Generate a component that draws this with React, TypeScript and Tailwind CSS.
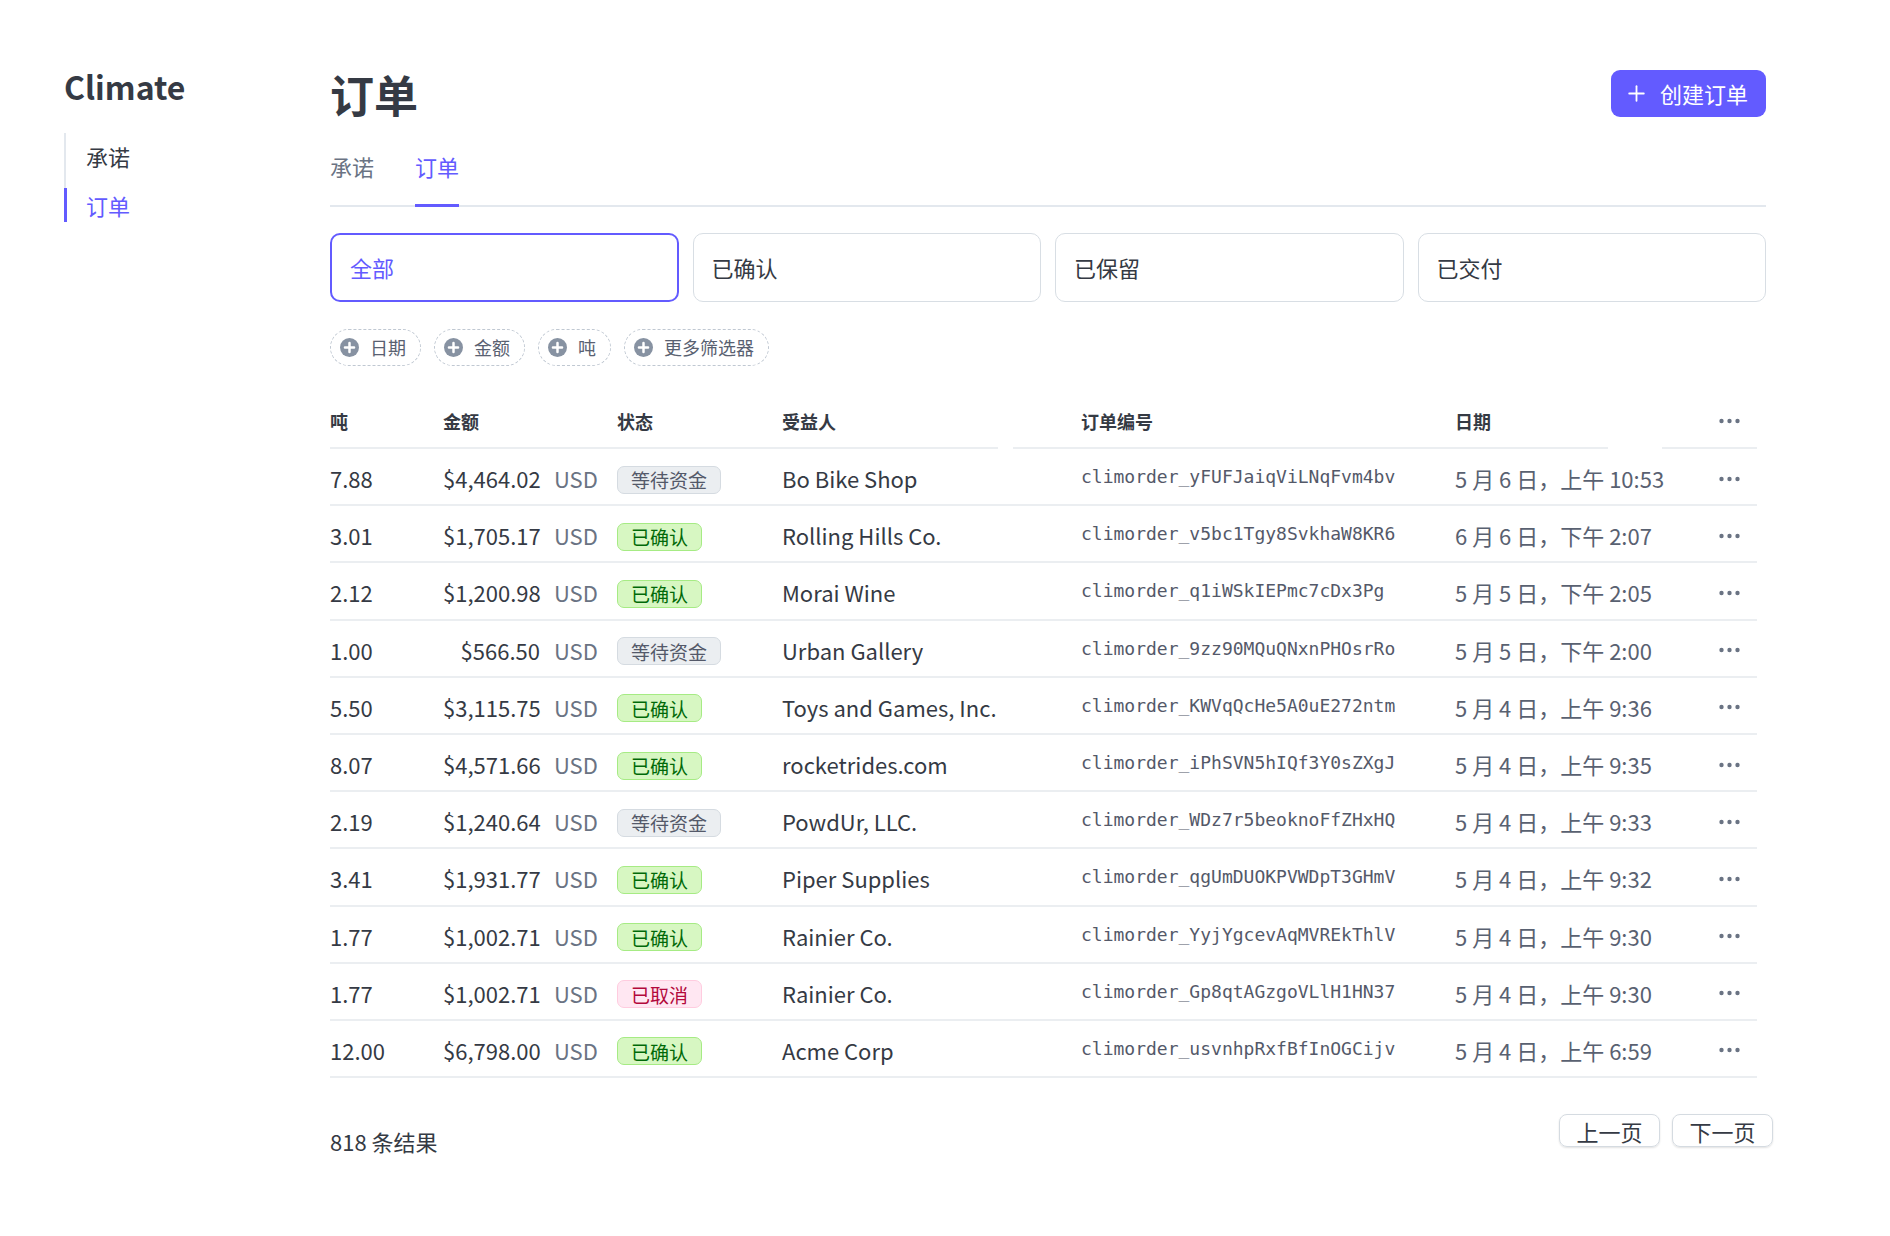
import { Plus } from 'lucide-react';

type StatusT = '等待资金' | '已确认' | '已取消';

type OrderT = {
  tons: string;
  amount: string;
  status: StatusT;
  beneficiary: string;
  orderId: string;
  date: string;
};

const ORDERS: OrderT[] = [
  { tons: '7.88', amount: '$4,464.02', status: '等待资金', beneficiary: 'Bo Bike Shop', orderId: 'climorder_yFUFJaiqViLNqFvm4bv', date: '5 月 6 日，上午 10:53' },
  { tons: '3.01', amount: '$1,705.17', status: '已确认', beneficiary: 'Rolling Hills Co.', orderId: 'climorder_v5bc1Tgy8SvkhaW8KR6', date: '6 月 6 日，下午 2:07' },
  { tons: '2.12', amount: '$1,200.98', status: '已确认', beneficiary: 'Morai Wine', orderId: 'climorder_q1iWSkIEPmc7cDx3Pg', date: '5 月 5 日，下午 2:05' },
  { tons: '1.00', amount: '$566.50', status: '等待资金', beneficiary: 'Urban Gallery', orderId: 'climorder_9zz90MQuQNxnPHOsrRo', date: '5 月 5 日，下午 2:00' },
  { tons: '5.50', amount: '$3,115.75', status: '已确认', beneficiary: 'Toys and Games, Inc.', orderId: 'climorder_KWVqQcHe5A0uE272ntm', date: '5 月 4 日，上午 9:36' },
  { tons: '8.07', amount: '$4,571.66', status: '已确认', beneficiary: 'rocketrides.com', orderId: 'climorder_iPhSVN5hIQf3Y0sZXgJ', date: '5 月 4 日，上午 9:35' },
  { tons: '2.19', amount: '$1,240.64', status: '等待资金', beneficiary: 'PowdUr, LLC.', orderId: 'climorder_WDz7r5beoknoFfZHxHQ', date: '5 月 4 日，上午 9:33' },
  { tons: '3.41', amount: '$1,931.77', status: '已确认', beneficiary: 'Piper Supplies', orderId: 'climorder_qgUmDUOKPVWDpT3GHmV', date: '5 月 4 日，上午 9:32' },
  { tons: '1.77', amount: '$1,002.71', status: '已确认', beneficiary: 'Rainier Co.', orderId: 'climorder_YyjYgcevAqMVREkThlV', date: '5 月 4 日，上午 9:30' },
  { tons: '1.77', amount: '$1,002.71', status: '已取消', beneficiary: 'Rainier Co.', orderId: 'climorder_Gp8qtAGzgoVLlH1HN37', date: '5 月 4 日，上午 9:30' },
  { tons: '12.00', amount: '$6,798.00', status: '已确认', beneficiary: 'Acme Corp', orderId: 'climorder_usvnhpRxfBfInOGCijv', date: '5 月 4 日，上午 6:59' },
];

const STATUS_CLASS: Record<StatusT, string> = {
  等待资金: 'border-[#d5dbe1] bg-[#ebeef1] text-[#545969]',
  已确认: 'border-[#a6eb84] bg-[#d7f7c2] text-[#006908]',
  已取消: 'border-[#ffccdf] bg-[#ffe7f2] text-[#b3093c]',
};

const FILTERS = ['全部', '已确认', '已保留', '已交付'];
const CHIPS = ['日期', '金额', '吨', '更多筛选器'];

function Dots() {
  return (
    <svg width="21" height="6" viewBox="0 0 21 6" className="text-[#6a7383]">
      <circle cx="2.5" cy="3" r="2.2" fill="currentColor" />
      <circle cx="10.5" cy="3" r="2.2" fill="currentColor" />
      <circle cx="18.5" cy="3" r="2.2" fill="currentColor" />
    </svg>
  );
}

function PlusCircle() {
  return (
    <svg width="19" height="19" viewBox="0 0 20 20">
      <circle cx="10" cy="10" r="10" fill="#8792a2" />
      <path d="M10 5.2v9.6M5.2 10h9.6" stroke="white" strokeWidth="2.6" strokeLinecap="round" />
    </svg>
  );
}

function StatusBadge({ status }: { status: StatusT }) {
  return (
    <span className={`inline-flex h-[28px] items-center rounded-[7px] border px-[13px] text-[19px] leading-none ${STATUS_CLASS[status]}`}>
      {status}
    </span>
  );
}

function OrderRow({ order }: { order: OrderT }) {
  return (
    <div className="flex h-[57.2px] items-center border-b-2 border-[#ebeef1] pt-[4px] text-[22px] text-[#353a44]">
      <div className="w-[113px]">{order.tons}</div>
      <div className="flex w-[174px] items-center">
        <span className="w-[97px] text-right">{order.amount}</span>
        <span className="ml-[14px] text-[#6a7383]">USD</span>
      </div>
      <div className="w-[165px]">
        <StatusBadge status={order.status} />
      </div>
      <div className="w-[231px] whitespace-nowrap">{order.beneficiary}</div>
      <div className="w-[442px] pb-[4px] pl-[68px] font-['DejaVu_Sans_Mono',monospace] text-[18px] text-[#545969]">
        {order.orderId}
      </div>
      <div className="w-[207px] whitespace-nowrap text-[#596171]">{order.date}</div>
      <div className="flex flex-1 justify-end pr-[17px]">
        <Dots />
      </div>
    </div>
  );
}

export default function App() {
  return (
    <div className="flex min-h-screen bg-white font-['Noto_Sans_CJK_SC','Noto_Sans',sans-serif] text-[#353a44]">
      <aside className="w-[330px] shrink-0 pl-[64px] pt-[64px]">
        <div className="text-[32px] font-semibold leading-[44px] text-[#353a44]">Climate</div>
        <nav className="mt-[25px] flex flex-col gap-[15px] border-l-2 border-[#e3e8ee] pt-[6px] text-[22px]">
          <a className="flex h-[34px] items-center pl-[20px] text-[#353a44]">承诺</a>
          <a className="-ml-[2px] flex h-[34px] items-center border-l-[3px] border-[#635bff] pl-[19px] text-[#635bff]">订单</a>
        </nav>
      </aside>

      <main className="flex-1 pr-[124px] pt-[70px]">
        <div className="flex h-[47px] items-center justify-between">
          <h1 className="text-[44px] font-bold leading-none text-[#353a44]">订单</h1>
          <button
            type="button"
            className="flex h-[47px] items-center gap-[11px] rounded-[9px] bg-[#635bff] pl-[13px] pr-[18px] text-[22px] text-white"
          >
            <Plus size={25} strokeWidth={1.75} />
            创建订单
          </button>
        </div>

        <div className="mt-[34px] flex gap-[41px] border-b-2 border-[#e3e8ee] text-[22px]">
          <button type="button" className="-mb-[2px] flex h-[56px] items-start border-b-[3px] border-transparent leading-[30px] text-[#6a7383]">
            承诺
          </button>
          <button type="button" className="-mb-[2px] flex h-[56px] items-start border-b-[3px] border-[#635bff] leading-[30px] text-[#635bff]">
            订单
          </button>
        </div>

        <div className="mt-[26px] grid grid-cols-4 gap-[14px]">
          {FILTERS.map((label, i) => (
            <button
              key={label}
              type="button"
              className={`flex h-[69px] items-center rounded-[10px] px-[18px] text-left text-[22px] ${
                i === 0 ? 'border-2 border-[#635bff] text-[#635bff]' : 'border-[1.5px] border-[#d8dee4] text-[#353a44]'
              }`}
            >
              {label}
            </button>
          ))}
        </div>

        <div className="mt-[27px] flex gap-[13px]">
          {CHIPS.map(label => (
            <button
              key={label}
              type="button"
              className="flex h-[37px] items-center gap-[11px] rounded-full border-[1.5px] border-dashed border-[#c0c8d2] pl-[9px] pr-[14px] text-[18px] text-[#596171]"
            >
              <PlusCircle />
              {label}
            </button>
          ))}
        </div>

        <div className="mr-[9px] mt-[29px]">
          <div className="flex h-[54px] items-center text-[18px] font-bold text-[#353a44]">
            <div className="h-full w-[668px] border-b-2 border-[#ebeef1]">
              <div className="flex h-full items-center">
                <div className="w-[113px]">吨</div>
                <div className="w-[174px]">金额</div>
                <div className="w-[165px]">状态</div>
                <div>受益人</div>
              </div>
            </div>
            <div className="w-[15px]" />
            <div className="flex h-full w-[595px] items-center border-b-2 border-[#ebeef1]">
              <div className="w-[442px] pl-[68px]">订单编号</div>
              <div>日期</div>
            </div>
            <div className="w-[54px]" />
            <div className="flex h-full flex-1 items-center justify-end border-b-2 border-[#ebeef1] pr-[17px]">
              <Dots />
            </div>
          </div>
          {ORDERS.map((order, i) => (
            <OrderRow key={i} order={order} />
          ))}
        </div>

        <div className="-mr-[7px] mt-[36px] flex items-start justify-between">
          <span className="pt-[12px] text-[22px] leading-[30px] text-[#353a44]">818 条结果</span>
          <div className="flex gap-[12px]">
            <button type="button" className="h-[33px] w-[101px] rounded-[8px] border border-[#d5dbe1] text-[22px] leading-none text-[#353a44] shadow-[0_1px_2px_rgba(0,0,0,0.12)]">
              上一页
            </button>
            <button type="button" className="h-[33px] w-[101px] rounded-[8px] border border-[#d5dbe1] text-[22px] leading-none text-[#353a44] shadow-[0_1px_2px_rgba(0,0,0,0.12)]">
              下一页
            </button>
          </div>
        </div>
      </main>
    </div>
  );
}
